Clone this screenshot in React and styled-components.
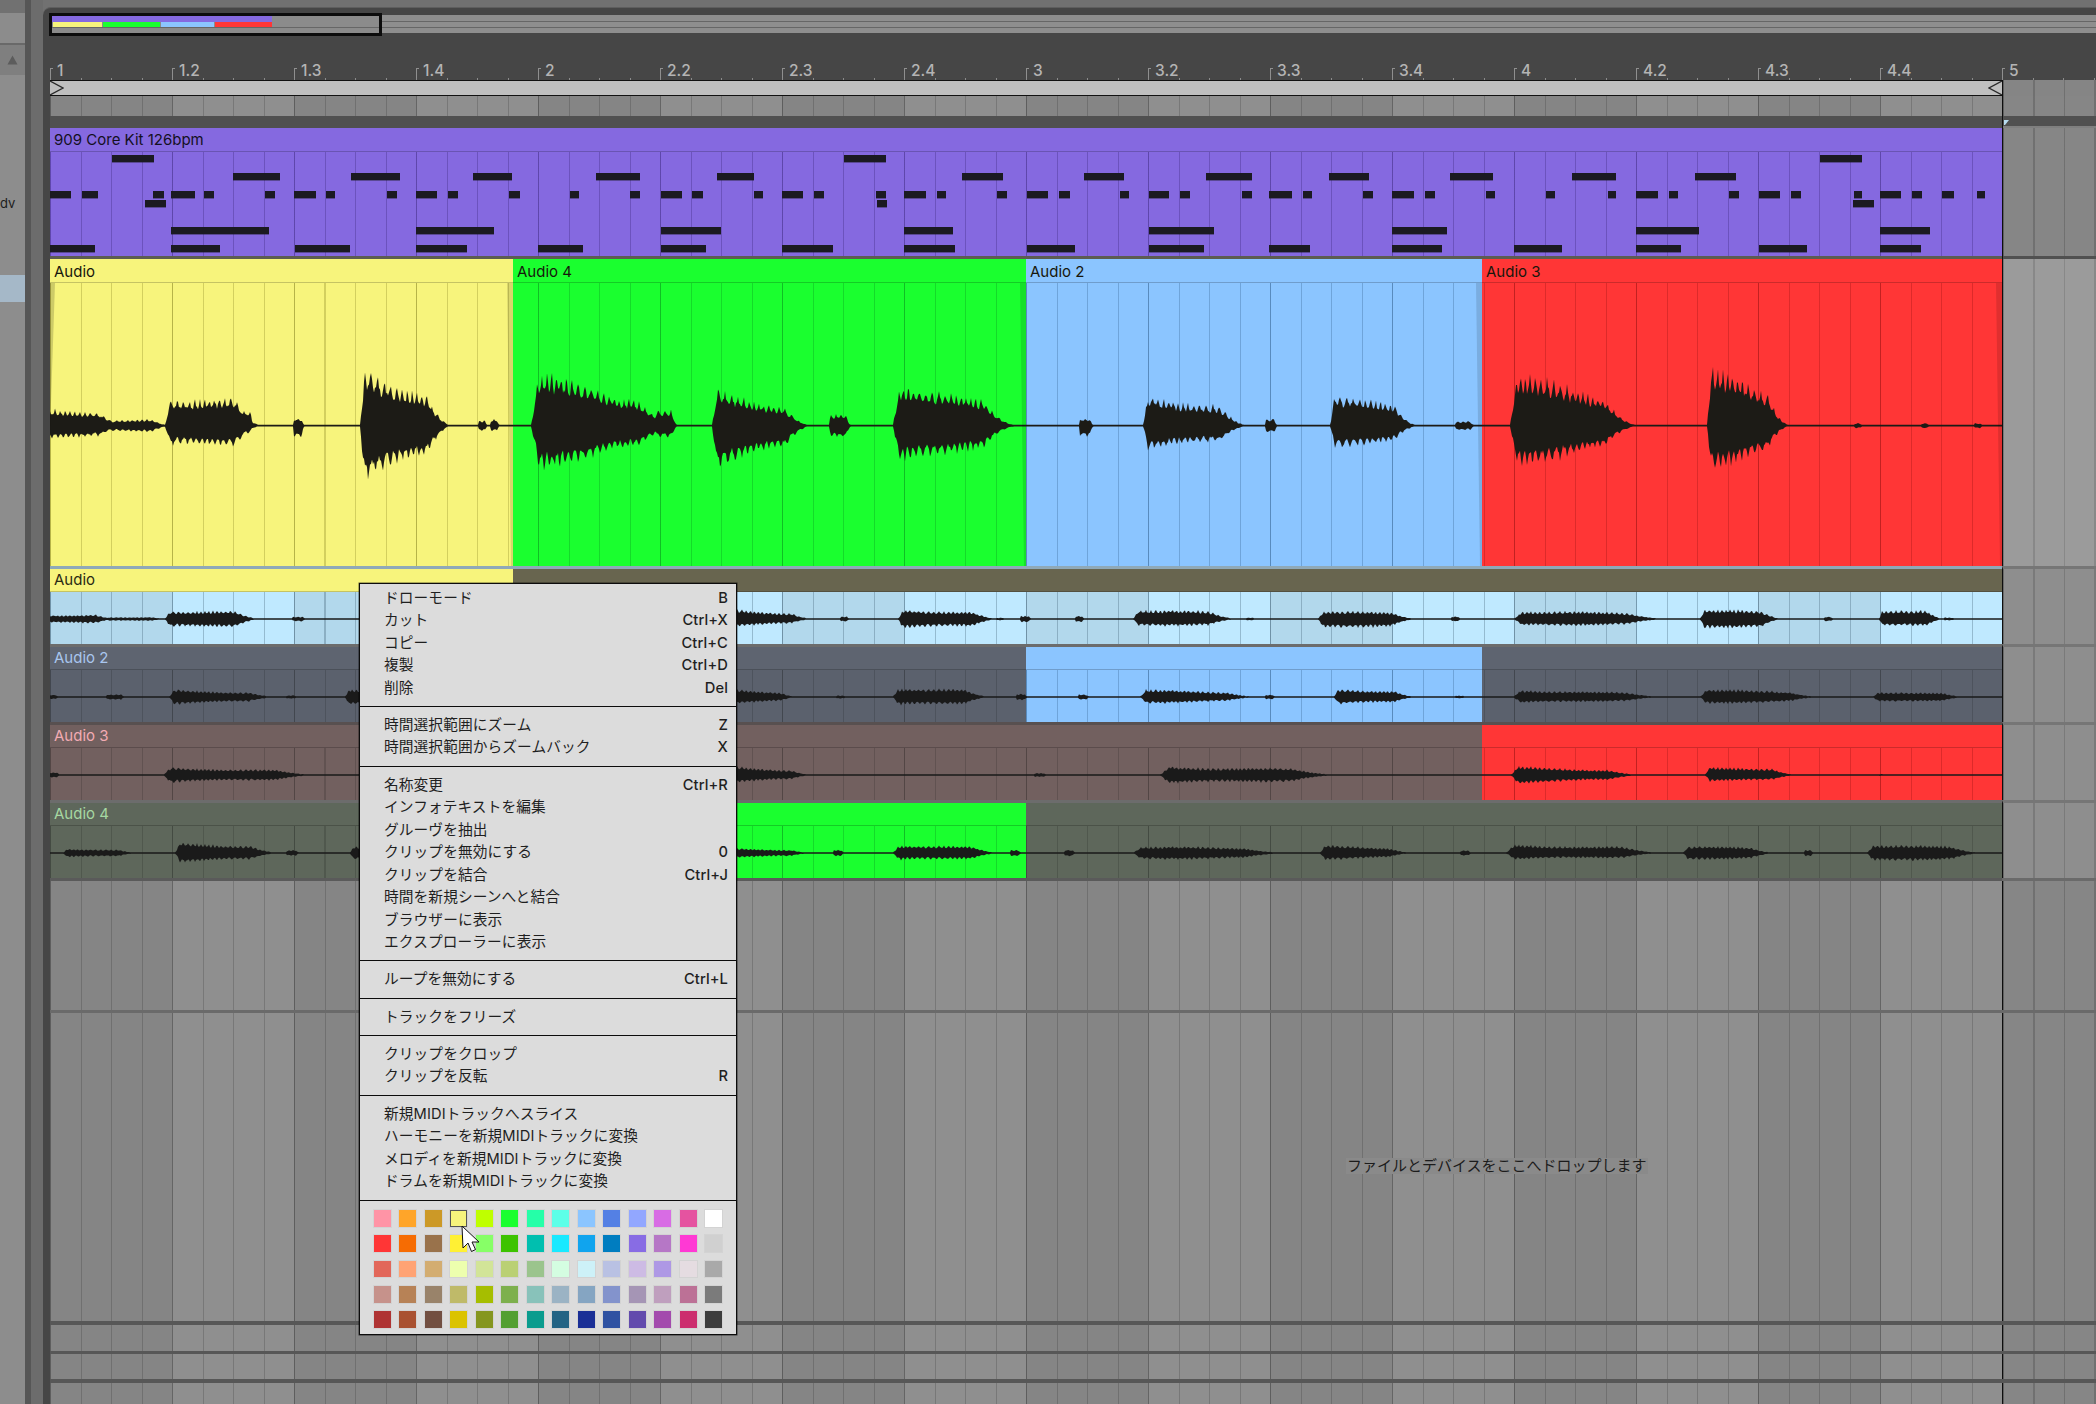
import React from 'react'
import styled, { createGlobalStyle } from 'styled-components'

const GlobalStyle = createGlobalStyle`
  html, body {
    margin: 0;
    width: 2096px;
    height: 1404px;
    overflow: hidden;
    background: #717171;
    font-family: Inter, "Noto Sans CJK JP", sans-serif;
  }
`

// every vertical grid line sits on 50 + n * 30.5, whatever element draws it
const ORIGIN = 50
const BEAT = 122
const STEP = 30.5

const lineLayer = (from, pitch, color, size) => {
  const o = (((ORIGIN - from) % pitch) + pitch) % pitch
  return `repeating-linear-gradient(90deg, transparent 0 ${o}px, ${color} ${o}px ${o + size}px, transparent ${o + size}px ${pitch}px)`
}

const stripeLayer = (from, a, b) => {
  const p = BEAT * 2
  const o = (((ORIGIN - from) % p) + p) % p
  if (o < BEAT) {
    return `repeating-linear-gradient(90deg, ${b} 0 ${o}px, ${a} ${o}px ${o + BEAT}px, ${b} ${o + BEAT}px ${p}px)`
  }
  return `repeating-linear-gradient(90deg, ${a} 0 ${o - BEAT}px, ${b} ${o - BEAT}px ${o}px, ${a} ${o}px ${p}px)`
}

const gridBg = ({ $from, $a, $b, $line, $beat }) =>
  [
    lineLayer($from, BEAT, $beat || $line, 1.3),
    lineLayer($from, STEP, $line, 1.2),
    stripeLayer($from, $a, $b),
  ].join(', ')

const Root = styled.div`
  position: relative;
  display: flex;
  width: 2096px;
  height: 1404px;
  overflow: hidden;
  background: #717171;
`
const Sidebar = styled.div`
  width: 25px;
  padding-top: 13px;
  display: flex;
  flex-direction: column;
  flex-shrink: 0;
`
const SideHead = styled.div`
  height: 30px;
  background: #8c8c8c;
  border-bottom: 2px solid #696969;
`
const SideButton = styled.div`
  height: 30px;
  background: #7f7f7f;
  display: flex;
  align-items: center;
  justify-content: center;
`
const SideBody = styled.div`
  flex: 1;
  padding-top: 120px;
  background: #8d8d8d;
`
const SideName = styled.div`
  height: 16px;
  line-height: 16px;
  font-size: 13px;
  color: #1d1d1d;
`
const SideSelected = styled.div`
  height: 27px;
  margin-top: 64px;
  background: #a5b8c8;
`
const Gutter = styled.div`
  width: 12px;
  flex-shrink: 0;
  border-left: 6px solid #565656;
  background: #6c6c6c;
`
const Panel = styled.div`
  flex: 1;
  min-width: 0;
  margin-top: 7px;
  padding-left: 7px;
  display: flex;
  flex-direction: column;
  background: #464646;
  border-top: 1px solid #5e5e5e;
  border-top-left-radius: 8px;
  box-sizing: border-box;
`
const Overview = styled.div`
  height: 28px;
  margin-left: -1px;
  padding-top: 5px;
  display: flex;
  box-sizing: border-box;
`
const OverviewBox = styled.div`
  width: 333px;
  height: 23px;
  flex-shrink: 0;
  box-sizing: border-box;
  border: 3px solid #0c0c0c;
  background: #8b8b8b;
`
const OverviewMidi = styled.div`
  width: 220px;
  height: 6px;
  background: #8569e0;
`
const OverviewClips = styled.div`
  display: flex;
  gap: 1px;
  height: 5px;
  padding-left: 1px;
  border-bottom: 1px solid #666;
`
const OverviewClip = styled.div`
  width: ${p => p.$w}px;
  background: ${p => p.$color};
`
const OverviewRest = styled.div`
  flex: 1;
  height: 18px;
  margin-top: 2px;
  background: linear-gradient(#8e8e8e 0 6px, #666 6px 7px, #8e8e8e 7px 12px, #666 12px 13px, #8e8e8e 13px);
`
const Ruler = styled.div`
  height: 44px;
  display: flex;
  align-items: flex-end;
  box-sizing: border-box;
  padding-bottom: 2px;
  background: repeating-linear-gradient(90deg, #8b8b8b 0 1px, transparent 1px ${STEP}px) bottom / 100% 2px no-repeat;
`
const RulerCell = styled.div`
  position: relative;
  flex: 0 0 ${BEAT}px;
  height: 17px;
  padding-left: 7px;
  box-sizing: border-box;
  line-height: 20px;
  font-size: 15.5px;
  font-weight: 500;
  color: #b4b4b4;
  &::before {
    content: '';
    position: absolute;
    left: 0;
    top: 7px;
    width: 2px;
    height: 9px;
    border-left: 1px solid #8f8f8f;
    border-top: 1px solid #8f8f8f;
  }
`
const Row = styled.div`
  display: flex;
  flex-shrink: 0;
  height: ${p => p.$h}px;
  box-sizing: border-box;
  border-bottom: ${p => (p.$rule ? `${p.$rule}px solid ${p.$ruleColor || '#575757'}` : 'none')};
`
const Filler = styled(Row)`
  flex: 1;
  height: auto;
`
const Lane = styled.div`
  width: 1952px;
  flex-shrink: 0;
  display: flex;
  align-items: center;
  background: ${gridBg};
`
const Tail = styled.div`
  flex: 1;
  box-sizing: border-box;
  background: ${gridBg};
  border-left: 1px solid #0e0e0e;
  border-top: ${p => (p.$rule ? `3px solid ${p.$rule}` : 'none')};
`
const LoopBar = styled.div`
  width: 1952px;
  flex-shrink: 0;
  display: flex;
  justify-content: space-between;
  box-sizing: border-box;
  background: #bfbfbf;
  border-top: 1px solid #111;
  border-bottom: 1px solid #111;
`
const Band = styled.div`
  width: 1952px;
  flex-shrink: 0;
  background: ${p => p.$color || '#505050'};
`
const BandTail = styled.div`
  flex: 1;
  padding: 4px 0 0 1px;
  border-left: 1px solid #0e0e0e;
  background: linear-gradient(#505050 0 10px, #7f7f7f 10px);
`
const Clips = styled.div`
  width: 1952px;
  flex-shrink: 0;
  display: flex;
  box-sizing: border-box;
  border-top: ${p => (p.$rule ? `3px solid ${p.$rule}` : 'none')};
`
const Clip = styled.div`
  width: ${p => p.$w}px;
  flex-shrink: 0;
  display: flex;
  flex-direction: column;
`
const ClipTitle = styled.div`
  height: ${p => p.$h}px;
  flex-shrink: 0;
  box-sizing: border-box;
  padding-left: 4px;
  line-height: ${p => p.$lh}px;
  font-size: 15px;
  color: ${p => p.$ink};
  background: ${p => p.$bg};
  border-bottom: 1px solid rgba(0, 0, 0, 0.2);
  white-space: nowrap;
`
const ClipBody = styled.div`
  flex: 1;
  min-height: 0;
  background: ${gridBg};
`
const Wave = styled.svg`
  display: block;
`
const HintText = styled.span`
  margin: 0 0 2px 1296px;
  padding: 0 1px;
  font-size: 15px;
  line-height: 16px;
  color: #1c1c1c;
  background: #8a8a8a;
  white-space: nowrap;
`
const Menu = styled.div`
  position: absolute;
  left: 359px;
  top: 583px;
  width: 378px;
  height: 752px;
  box-sizing: border-box;
  background: #dcdcdc;
  border: 1px solid #0c0c0c;
  box-shadow: 0 0 0 0.5px rgba(0, 0, 0, 0.6);
  font-size: 14.7px;
  letter-spacing: 0.1px;
  color: #1f1f1f;
`
const MenuSection = styled.div`
  padding: ${p => (p.$first ? '2.5px' : '6.9px')} 0 6.9px;
  border-bottom: 1px solid #0c0c0c;
`
const MenuItem = styled.div`
  display: flex;
  justify-content: space-between;
  height: 22.5px;
  line-height: 22.5px;
  padding: 0 8px 0 24px;
  white-space: nowrap;
`
const Shortcut = styled.span`
  font-weight: 500;
`
const Palette = styled.div`
  display: grid;
  grid-template-columns: repeat(14, 16.7px);
  grid-auto-rows: 16.7px;
  column-gap: 8.8px;
  row-gap: 8.6px;
  padding: 9.5px 0 0 14px;
`
const Swatch = styled.div`
  box-sizing: border-box;
  background: ${p => p.$color};
  border: ${p => (p.$picked ? '1.5px solid #555' : '0')};
  box-shadow: 0 0 0 1px rgba(0, 0, 0, 0.04);
`
const Cursor = styled.svg`
  position: absolute;
  left: 461px;
  top: 1225px;
`

const LABELS = ['1', '1.2', '1.3', '1.4', '2', '2.2', '2.3', '2.4', '3', '3.2', '3.3', '3.4', '4', '4.2', '4.3', '4.4', '5']

const NOTES = {
  0: [[112, 154], [844, 886], [1820, 1862]],
  2: [[233, 280], [351, 400], [473, 512], [596, 640], [717, 754], [962, 1003], [1084, 1124], [1206, 1252], [1329, 1369], [1450, 1493], [1572, 1616], [1695, 1736]],
  4: [[50, 71], [82, 98], [153, 164], [171, 195], [204, 214], [265, 275], [294, 316], [326, 335], [387, 397], [416, 437], [448, 458], [509, 520], [570, 579], [630, 640], [661, 682], [692, 703], [754, 763], [782, 803], [814, 824], [876, 886], [904, 926], [937, 946], [997, 1007], [1027, 1048], [1059, 1070], [1120, 1129], [1149, 1169], [1180, 1190], [1242, 1252], [1269, 1292], [1303, 1312], [1363, 1373], [1392, 1414], [1425, 1435], [1486, 1495], [1546, 1555], [1608, 1616], [1636, 1658], [1669, 1678], [1729, 1739], [1759, 1780], [1791, 1801], [1854, 1862], [1880, 1901], [1912, 1922], [1942, 1954], [1977, 1985]],
  5: [[145, 166], [877, 887], [1853, 1874]],
  8: [[171, 269], [416, 494], [661, 721], [904, 953], [1149, 1214], [1392, 1447], [1636, 1699], [1880, 1930]],
  10: [[50, 95], [171, 220], [295, 350], [416, 467], [538, 583], [661, 706], [782, 833], [904, 955], [1027, 1075], [1149, 1204], [1269, 1310], [1392, 1442], [1514, 1562], [1636, 1681], [1759, 1807], [1880, 1921]],
}

const PALETTE = [
  ['#ff94a6', '#ffa529', '#cc9927', '#f7f47c', '#bfff00', '#1aff2f', '#25ffa8', '#5cffe8', '#8bc5ff', '#5480e4', '#92a7ff', '#d86ce4', '#e553a0', '#ffffff'],
  ['#ff3636', '#f66c03', '#99724b', '#fff034', '#87ff67', '#3dc300', '#00bfaf', '#19e9ff', '#10a4ee', '#007dc0', '#886ce4', '#b677c6', '#ff39d4', '#d0d0d0'],
  ['#e2675a', '#ffa374', '#d3ad71', '#edffae', '#d2e498', '#bad074', '#9bc48d', '#d4fde1', '#cdf1f8', '#b9c1e3', '#cdbbe4', '#ae98e5', '#e5dce1', '#a9a9a9'],
  ['#c6928b', '#b78256', '#99836a', '#bfba69', '#a6be00', '#7db04d', '#88c2ba', '#9bb3c4', '#85a5c2', '#8393cc', '#a595b5', '#bf9fbe', '#bc7196', '#7b7b7b'],
  ['#af3333', '#a95131', '#724f41', '#dbc300', '#85961f', '#539f31', '#0a9c8e', '#236384', '#1a2f96', '#2f52a2', '#624bad', '#a34bad', '#cc2e6e', '#3c3c3c'],
]

const MENU = [
  [['ドローモード', 'B'], ['カット', 'Ctrl+X'], ['コピー', 'Ctrl+C'], ['複製', 'Ctrl+D'], ['削除', 'Del']],
  [['時間選択範囲にズーム', 'Z'], ['時間選択範囲からズームバック', 'X']],
  [['名称変更', 'Ctrl+R'], ['インフォテキストを編集'], ['グルーヴを抽出'], ['クリップを無効にする', '0'], ['クリップを結合', 'Ctrl+J'], ['時間を新規シーンへと結合'], ['ブラウザーに表示'], ['エクスプローラーに表示']],
  [['ループを無効にする', 'Ctrl+L']],
  [['トラックをフリーズ']],
  [['クリップをクロップ'], ['クリップを反転', 'R']],
  [['新規MIDIトラックへスライス'], ['ハーモニーを新規MIDIトラックに変換'], ['メロディを新規MIDIトラックに変換'], ['ドラムを新規MIDIトラックに変換']],
]

const noise = x => {
  const v = Math.sin(x * 12.9898) * 43758.5453
  return v - Math.floor(v)
}

const spike = phase => {
  const f = phase - Math.floor(phase)
  const tri = f < 0.5 ? 2 * f : 2 - 2 * f
  return tri * tri
}

// blobs: [from, to, amp up, amp down, how much of the amp is left before the taper]
const buildWave = (blobs, cy, period, thin) => {
  const up = []
  const down = []
  for (let x = ORIGIN; x <= 2002; x += 1) {
    let u = thin
    let d = thin
    blobs.forEach(([x0, x1, au, ad, keep = 0.7]) => {
      if (x < x0 || x > x1) return
      const t = (x - x0) / (x1 - x0)
      const env =
        Math.min(1, t / 0.05) *
        (t > 0.72 ? Math.pow((1 - t) / 0.28, 1.7) : 1) *
        (keep + (1 - keep) * Math.pow(1 - t, 1.4)) *
        (1 + 0.1 * Math.sin(x / 19 + x0))
      const wob = 0.35 * Math.sin(x / 11)
      u = Math.max(u, au * env * (0.58 + 0.34 * spike(x / period + wob) + 0.14 * noise(x)))
      d = Math.max(d, ad * env * (0.58 + 0.34 * spike(x / (period * 1.1) + wob + 0.4) + 0.14 * noise(x + 7)))
    })
    up.push(`${x.toFixed(1)},${(cy - u).toFixed(1)}`)
    down.unshift(`${x.toFixed(1)},${(cy + d).toFixed(1)}`)
  }
  return `M${up.join('L')}L${down.join('L')}Z`
}

const MAIN_WAVE = buildWave(
  [
    [30, 128, 16, 13, 0.85], [100, 172, 6, 6, 1], [165, 262, 30, 22, 0.85], [242, 254, 16, 8, 1], [293, 305, 7, 11, 1],
    [360, 452, 56, 54, 0.55], [478, 488, 5, 5, 1], [490, 500, 6, 5, 1],
    [531, 680, 56, 46, 0.4], [655, 678, 17, 13, 1], [712, 812, 36, 42, 0.5], [829, 852, 12, 12, 1], [893, 1020, 48, 42, 0.4],
    [1079, 1094, 8, 12, 1], [1143, 1250, 35, 28, 0.45], [1265, 1278, 7, 7, 1], [1330, 1420, 36, 26, 0.45], [1455, 1476, 5, 5, 1],
    [1510, 1640, 54, 42, 0.5], [1707, 1792, 62, 47, 0.4], [1854, 1863, 3, 3, 1], [1921, 1930, 3, 3, 1], [1974, 1983, 3, 3, 1],
  ],
  142.7, 5.6, 0.9
)

const TRACK_WAVES = [
  [[40, 118, 4.5, 4.5, 0.9], [105, 170, 2, 2, 1], [165, 262, 9, 9, 0.85], [292, 307, 2.5, 2.5, 1], [730, 815, 10, 8, 0.6], [840, 850, 3, 3, 1], [898, 1000, 10, 10, 0.75], [996, 1006, 1.5, 1.5, 1], [1020, 1032, 3.5, 3.5, 1], [1075, 1085, 3, 3, 1], [1133, 1240, 10, 8, 0.75], [1246, 1256, 1.6, 1.6, 1], [1318, 1420, 9, 10, 0.7], [1451, 1461, 2.5, 2.5, 1], [1514, 1672, 9, 8, 0.7], [1700, 1785, 11, 11, 0.65], [1824, 1834, 2.5, 2.5, 1], [1879, 1945, 10, 8, 0.8], [1944, 1956, 1.8, 1.8, 1]],
  [[45, 60, 2.5, 2.5, 1], [106, 127, 3, 3, 1], [169, 280, 8, 8, 0.55], [286, 298, 1.8, 1.8, 1], [345, 420, 9, 9, 0.7], [730, 800, 8, 7, 0.6], [836, 847, 1.6, 1.6, 1], [893, 992, 10, 9, 0.75], [1016, 1028, 3, 3, 1], [1078, 1090, 3, 3, 1], [1140, 1262, 8, 7, 0.6], [1265, 1276, 2.4, 2.4, 1], [1334, 1418, 9, 8, 0.65], [1455, 1466, 1.6, 1.6, 1], [1513, 1672, 8, 7, 0.5], [1700, 1826, 9, 8, 0.5], [1873, 1970, 5.5, 5.5, 0.65]],
  [[45, 62, 3, 3, 1], [163, 320, 8, 8, 0.6], [730, 815, 9, 8, 0.55], [1034, 1048, 1.8, 1.8, 1], [1160, 1345, 9, 9, 0.7], [1511, 1645, 9, 9, 0.55], [1705, 1800, 10, 8, 0.5], [1878, 1887, 1.1, 1.1, 1]],
  [[63, 140, 5, 5, 0.65], [175, 280, 11, 10, 0.65], [286, 300, 3, 3, 1], [350, 420, 8, 8, 0.7], [730, 815, 5, 5, 0.65], [833, 845, 3.5, 3.5, 1], [893, 1002, 9, 8, 0.7], [1010, 1022, 3, 3, 1], [1064, 1076, 3, 3, 1], [1133, 1288, 7, 7, 0.8], [1320, 1416, 8, 7, 0.65], [1460, 1472, 3, 3, 1], [1506, 1668, 9, 7, 0.65], [1683, 1778, 7, 7, 0.8], [1804, 1814, 3, 3, 1], [1867, 1985, 9, 9, 0.7]],
].map(blobs => buildWave(blobs, 27, 4.5, 0.7))

const AUDIO_CLIPS = [
  { from: 50, to: 513, label: 'Audio', color: '#f7f47c', line: 'rgba(95, 90, 0, 0.24)', fadeLeft: true },
  { from: 513, to: 1026, label: 'Audio 4', color: '#1aff2f', line: 'rgba(0, 90, 20, 0.22)' },
  { from: 1026, to: 1482, label: 'Audio 2', color: '#8bc5ff', line: 'rgba(20, 60, 100, 0.24)' },
  { from: 1482, to: 2002, label: 'Audio 3', color: '#ff3636', line: 'rgba(100, 0, 0, 0.22)' },
]

const clipped = (from, to) => [
  { from: ORIGIN, to: from },
  { from, to },
  { from: to, to: 2002 },
].filter(c => c.to > c.from)

const TRACKS = [
  {
    name: 'Audio',
    rule: '#8fa9b8',
    title: '#68654f',
    ink: '#2c2b1c',
    a: '#b2d8ec',
    b: '#bfe9ff',
    line: 'rgba(50, 80, 100, 0.3)',
    clips: [
      { from: 50, to: 513, titleBg: '#f7f47c', label: true },
      { from: 513, to: 2002 },
    ],
  },
  {
    name: 'Audio 2',
    rule: '#6c6c6c',
    title: '#5e6470',
    ink: '#a9c6ee',
    a: '#5b616d',
    b: '#5b616d',
    line: 'rgba(0, 0, 0, 0.15)',
    clips: clipped(1026, 1482).map(c => (c.from === 1026 ? { ...c, lit: '#8bc5ff', litLine: 'rgba(20, 60, 100, 0.24)' } : c)),
  },
  {
    name: 'Audio 3',
    rule: '#585050',
    title: '#72605f',
    ink: '#f2abb3',
    a: '#72605f',
    b: '#72605f',
    line: 'rgba(0, 0, 0, 0.15)',
    clips: clipped(1482, 2002).map(c => (c.from === 1482 ? { ...c, lit: '#ff3636', litLine: 'rgba(100, 0, 0, 0.22)' } : c)),
  },
  {
    name: 'Audio 4',
    rule: '#6c6c6c',
    title: '#5e675b',
    ink: '#a6d8a2',
    a: '#5e675b',
    b: '#5e675b',
    line: 'rgba(0, 0, 0, 0.15)',
    clips: clipped(513, 1026).map(c => (c.from === 513 ? { ...c, lit: '#1aff2f', litLine: 'rgba(0, 90, 20, 0.22)' } : c)),
  },
]

const EMPTY = { $a: '#858585', $b: '#8f8f8f', $line: 'rgba(0, 0, 0, 0.16)' }
const TAIL_EMPTY = { $from: 2002, $a: '#868686', $b: '#8c8c8c', $line: 'rgba(0, 0, 0, 0.16)' }
const TAIL_TRACK = { $from: 2002, $a: '#8e8e8e', $b: '#8e8e8e', $line: 'rgba(0, 0, 0, 0.14)', $rule: '#767676' }

const EmptyRow = ({ h, rule, ruleColor, grow, children }) => {
  const Box = grow ? Filler : Row
  return (
    <Box $h={h} $rule={rule} $ruleColor={ruleColor}>
      <Lane $from={ORIGIN} {...EMPTY}>{children}</Lane>
      <Tail {...TAIL_EMPTY} />
    </Box>
  )
}

const MidiRow = () => (
  <Row $h={128}>
    <Clips>
      <Clip $w={1952}>
        <ClipTitle $h={24} $lh={24} $bg="#8569e0" $ink="#14101f">909 Core Kit 126bpm</ClipTitle>
        <ClipBody $from={ORIGIN} $a="#8569e0" $b="#8569e0" $line="rgba(50, 30, 110, 0.3)" $beat="rgba(50, 30, 110, 0.22)">
          <Wave width="1952" height="104" viewBox="50 128 1952 104">
            {Object.entries(NOTES).flatMap(([k, notes]) =>
              notes.map(([x0, x1]) => (
                <rect key={`${k}-${x0}`} x={x0} y={155 - 24 + k * 9} width={x1 - x0} height="7.4" fill="#1b1a22" />
              ))
            )}
          </Wave>
        </ClipBody>
      </Clip>
    </Clips>
    <Tail $from={2002} $a="#868686" $b="#868686" $line="rgba(0, 0, 0, 0.16)" />
  </Row>
)

const AudioRow = () => (
  <Row $h={307}>
    <Clips>
      {AUDIO_CLIPS.map(c => (
        <Clip key={c.label} $w={c.to - c.from}>
          <ClipTitle $h={24} $lh={26} $bg={c.color} $ink="#17170c">{c.label}</ClipTitle>
          <ClipBody $from={c.from} $a={c.color} $b={c.color} $line={c.line}>
            <Wave width={c.to - c.from} height="283" viewBox={`${c.from} 0 ${c.to - c.from} 283`}>
              <path d={MAIN_WAVE} fill="#1c1b16" />
              <polygon points={`${c.to - 6},0 ${c.to},0 ${c.to},283 ${c.to - 2},283`} fill="rgba(0, 0, 0, 0.12)" />
              {c.fadeLeft && <polygon points={`${c.from},0 ${c.from + 5},0 ${c.from},150`} fill="rgba(0, 0, 0, 0.17)" />}
            </Wave>
          </ClipBody>
        </Clip>
      ))}
    </Clips>
    <Tail $from={2002} $a="#9b9b9b" $b="#9b9b9b" $line="rgba(0, 0, 0, 0.12)" />
  </Row>
)

const Track = ({ track, wave }) => (
  <Row $h={78}>
    <Clips $rule={track.rule}>
      {track.clips.map(c => (
        <Clip key={c.from} $w={c.to - c.from}>
          <ClipTitle $h={23} $lh={21} $bg={c.titleBg || c.lit || track.title} $ink={c.titleBg ? '#2a2a14' : track.ink}>
            {(c.label || (track.name !== 'Audio' && c.from === ORIGIN)) && track.name}
          </ClipTitle>
          <ClipBody $from={c.from} $a={c.lit || track.a} $b={c.lit || track.b} $line={c.litLine || track.line}>
            <Wave width={c.to - c.from} height="52" viewBox={`${c.from} 0 ${c.to - c.from} 52`}>
              <path d={wave} fill="#1a1a1a" />
            </Wave>
          </ClipBody>
        </Clip>
      ))}
    </Clips>
    <Tail {...TAIL_TRACK} />
  </Row>
)

const ContextMenu = () => (
  <Menu>
    {MENU.map((items, i) => (
      <MenuSection key={items[0][0]} $first={i === 0}>
        {items.map(([label, key]) => (
          <MenuItem key={label}>
            <span>{label}</span>
            {key && <Shortcut>{key}</Shortcut>}
          </MenuItem>
        ))}
      </MenuSection>
    ))}
    <Palette>
      {PALETTE.flat().map((color, i) => (
        <Swatch key={i} $color={color} $picked={i === 3} />
      ))}
    </Palette>
  </Menu>
)

const App = () => (
  <Root>
    <GlobalStyle />
    <Sidebar>
      <SideHead />
      <SideButton>
        <svg width="11" height="10" viewBox="0 0 11 10">
          <path d="M5.5 0.5 L10.5 9.5 L0.5 9.5 Z" fill="#5c5c5c" />
        </svg>
      </SideButton>
      <SideBody>
        <SideName>dv</SideName>
        <SideSelected />
      </SideBody>
    </Sidebar>
    <Gutter />
    <Panel>
      <Overview>
        <OverviewBox>
          <OverviewMidi />
          <OverviewClips>
            <OverviewClip $w={49} $color="#f7f47c" />
            <OverviewClip $w={57} $color="#1aff2f" />
            <OverviewClip $w={53} $color="#8bc5ff" />
            <OverviewClip $w={57} $color="#ff3636" />
          </OverviewClips>
        </OverviewBox>
        <OverviewRest />
      </Overview>
      <Ruler>
        {LABELS.map(label => (
          <RulerCell key={label}>{label}</RulerCell>
        ))}
      </Ruler>
      <Row $h={16}>
        <LoopBar>
          <svg width="14" height="14" viewBox="0 0 14 14">
            <path d="M0 0 L13 7 L0 14" fill="none" stroke="#2a2a2a" strokeWidth="1.3" />
          </svg>
          <svg width="14" height="14" viewBox="0 0 14 14">
            <path d="M14 0 L1 7 L14 14" fill="none" stroke="#2a2a2a" strokeWidth="1.3" />
          </svg>
        </LoopBar>
        <Tail {...TAIL_EMPTY} $a="#858585" $b="#858585" />
      </Row>
      <EmptyRow h={20} />
      <Row $h={12}>
        <Band />
        <BandTail>
          <svg width="5" height="5" viewBox="0 0 5 5" style={{ display: 'block' }}>
            <path d="M0 0 H5 L1 5 H0 Z" fill="#b8dcf0" />
          </svg>
        </BandTail>
      </Row>
      <MidiRow />
      <Row $h={3}>
        <Band $color="#5c5c52" />
        <BandTail />
      </Row>
      <AudioRow />
      {TRACKS.map((track, i) => (
        <Track key={track.name} track={track} wave={TRACK_WAVES[i]} />
      ))}
      <Row $h={3}>
        <Band $color="#5a5a5a" />
        <Band $color="#6a6a6a" />
      </Row>
      <EmptyRow h={132} rule={3} ruleColor="#6a6a6a" />
      <EmptyRow h={312} rule={4}>
        <HintText>ファイルとデバイスをここへドロップします</HintText>
      </EmptyRow>
      <EmptyRow h={29} rule={3} />
      <EmptyRow h={29} rule={4} />
      <EmptyRow grow />
    </Panel>
    <ContextMenu />
    <Cursor width="20" height="28" viewBox="0 0 20 28">
      <path d="M1 1 L2 23 L7 18 L10.5 26.5 L14.5 24.5 L11 17 L18 17 Z" fill="#fff" stroke="#111" strokeWidth="1" strokeLinejoin="miter" />
    </Cursor>
  </Root>
)

export default App
